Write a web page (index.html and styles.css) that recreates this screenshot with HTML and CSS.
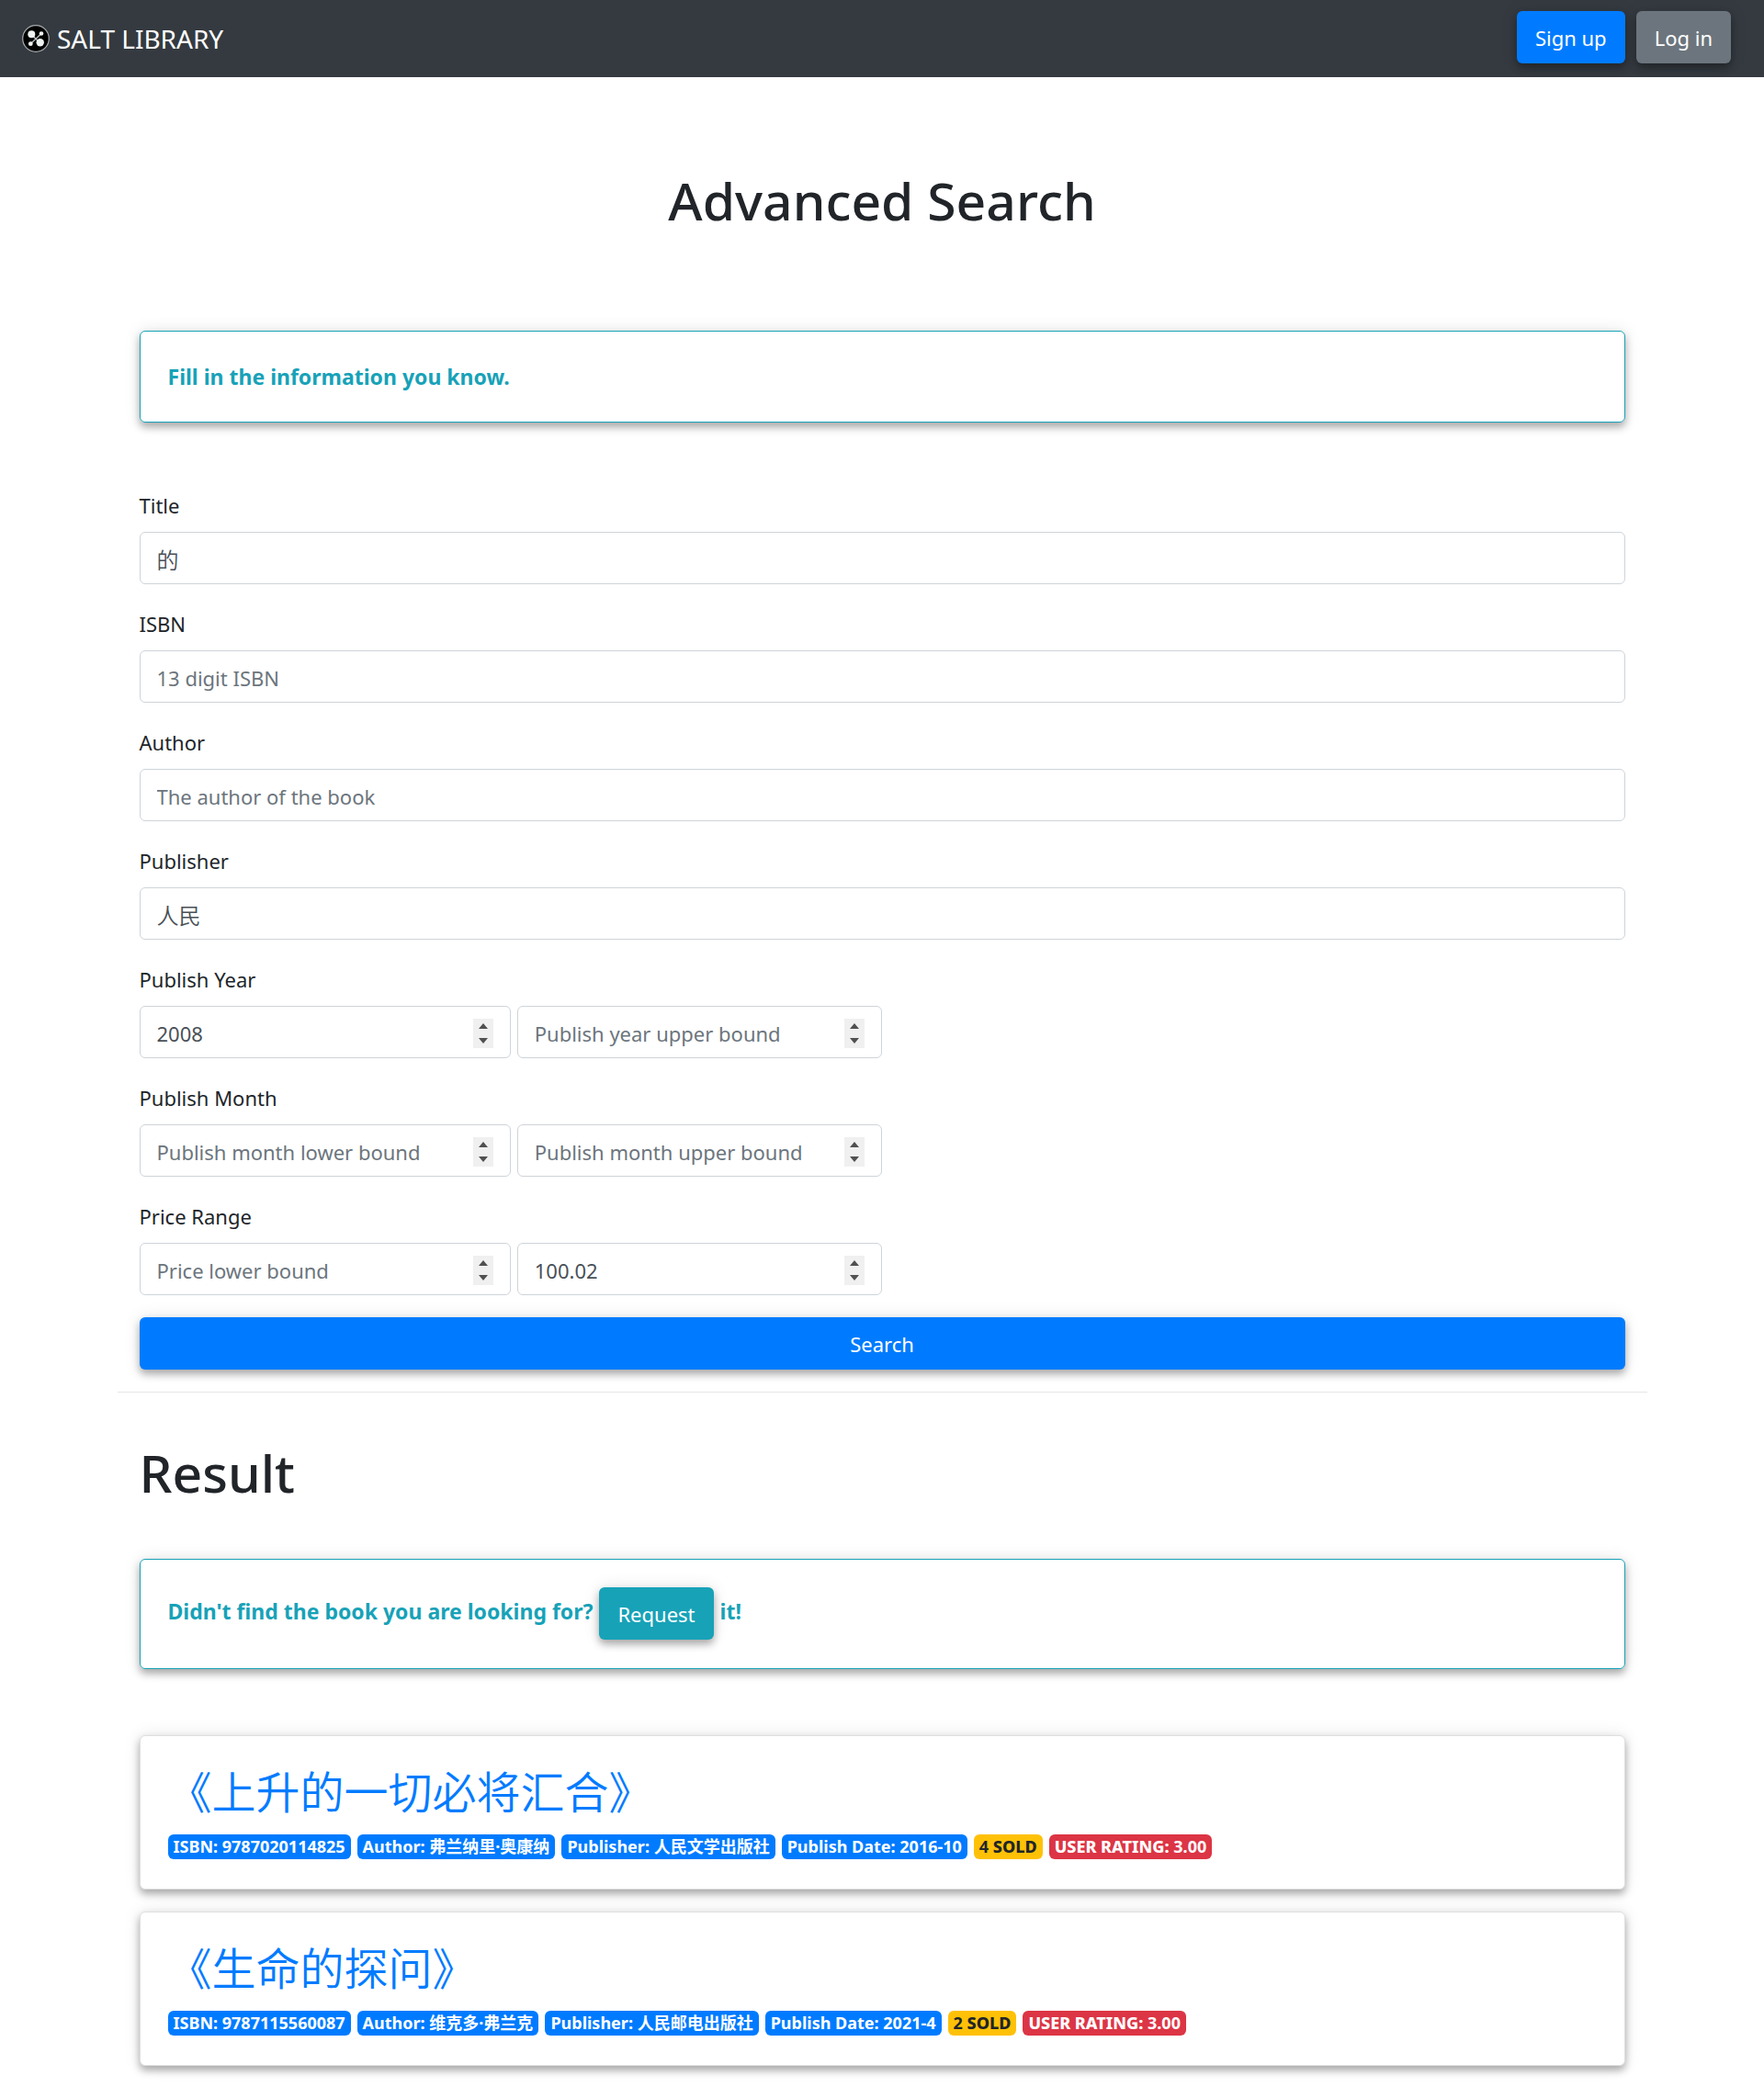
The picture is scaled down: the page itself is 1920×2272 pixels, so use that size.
FILE: index.html
```html
<!DOCTYPE html>
<html lang="en">
<head>
<meta charset="utf-8">
<meta name="viewport" content="width=device-width, initial-scale=1">
<title>Advanced Search - SALT LIBRARY</title>
<link rel="stylesheet" href="styles.css">
</head>
<body>
<nav class="navbar">
  <a class="brand" href="#">
    <svg class="brand-logo" viewBox="0 0 30 30" aria-hidden="true">
      <circle cx="15" cy="15" r="14.3" fill="#000" stroke="#a9acaf" stroke-width="1.2"/>
      <path d="M10 10.500L19.500 19.500M21 9.500L9.500 20.500" stroke="#b9bdbd" stroke-width="1.300"/>
      <circle cx="10.300" cy="10.300" r="4" fill="#eef3f2"/>
      <circle cx="19.700" cy="19.300" r="4.200" fill="#eef3f2"/>
      <circle cx="21" cy="9.500" r="2.300" fill="#eef3f2"/>
      <circle cx="9.300" cy="20.700" r="2.400" fill="#eef3f2"/>
    </svg>
    <span>SALT LIBRARY</span>
  </a>
  <div class="nav-actions">
    <button class="btn btn-primary" type="button">Sign up</button>
    <button class="btn btn-secondary" type="button">Log in</button>
  </div>
</nav>

<main class="container">
  <h1 class="page-title">Advanced Search</h1>

  <div class="alert">Fill in the information you know.</div>

  <form class="search-form" action="#">
    <div class="form-group">
      <label for="title">Title</label>
      <input class="control cjk" id="title" type="text" value="的">
    </div>
    <div class="form-group">
      <label for="isbn">ISBN</label>
      <input class="control" id="isbn" type="text" placeholder="13 digit ISBN">
    </div>
    <div class="form-group">
      <label for="author">Author</label>
      <input class="control" id="author" type="text" placeholder="The author of the book">
    </div>
    <div class="form-group">
      <label for="publisher">Publisher</label>
      <input class="control cjk" id="publisher" type="text" value="人民">
    </div>
    <div class="form-group">
      <label for="year-low">Publish Year</label>
      <div class="range">
        <input class="control" id="year-low" type="number" value="2008" placeholder="Publish year lower bound">
        <input class="control" type="number" placeholder="Publish year upper bound" aria-label="Publish year upper bound">
      </div>
    </div>
    <div class="form-group">
      <label for="month-low">Publish Month</label>
      <div class="range">
        <input class="control" id="month-low" type="number" placeholder="Publish month lower bound">
        <input class="control" type="number" placeholder="Publish month upper bound" aria-label="Publish month upper bound">
      </div>
    </div>
    <div class="form-group">
      <label for="price-low">Price Range</label>
      <div class="range">
        <input class="control" id="price-low" type="number" step="0.01" placeholder="Price lower bound">
        <input class="control" type="number" step="0.01" value="100.02" placeholder="Price upper bound" aria-label="Price upper bound">
      </div>
    </div>
    <button class="btn btn-primary btn-block" type="submit">Search</button>
  </form>

  <hr class="divider">

  <section class="results">
    <h2 class="section-title">Result</h2>

    <div class="alert alert-request">
      <span>Didn't find the book you are looking for?</span>
      <button class="btn btn-info" type="button">Request</button>
      <span>it!</span>
    </div>

    <article class="card">
      <h3 class="book-title"><a href="#">《上升的一切必将汇合》</a></h3>
      <div class="badges">
        <span class="badge">ISBN: 9787020114825</span>
        <span class="badge">Author: <span lang="zh">弗兰纳里·奥康纳</span></span>
        <span class="badge">Publisher: <span lang="zh">人民文学出版社</span></span>
        <span class="badge">Publish Date: 2016-10</span>
        <span class="badge badge-sold">4 <b>SOLD</b></span>
        <span class="badge badge-rating"><b>USER RATING:</b> 3.00</span>
      </div>
    </article>

    <article class="card">
      <h3 class="book-title"><a href="#">《生命的探问》</a></h3>
      <div class="badges">
        <span class="badge">ISBN: 9787115560087</span>
        <span class="badge">Author: <span lang="zh">维克多·弗兰克</span></span>
        <span class="badge">Publisher: <span lang="zh">人民邮电出版社</span></span>
        <span class="badge">Publish Date: 2021-4</span>
        <span class="badge badge-sold">2 <b>SOLD</b></span>
        <span class="badge badge-rating"><b>USER RATING:</b> 3.00</span>
      </div>
    </article>
  </section>
</main>
</body>
</html>
```
FILE: styles.css
```css
*, *::before, *::after { box-sizing: border-box; }

:root {
  --blue: #007bff;
  --teal: #17a2b8;
  --text: #212529;
  --shadow: 0 5px 8px rgba(0, 0, 0, 0.3), 0 0 18px rgba(0, 0, 0, 0.1);
}

body {
  margin: 0;
  background: #fff;
  color: var(--text);
  font: 400 22px/36px "Noto Sans", "Noto Sans CJK SC", sans-serif;
}

.navbar {
  display: flex;
  align-items: center;
  justify-content: space-between;
  min-height: 84px;
  padding: 12px 36px 12px 24px;
  background: #343a40;
}

.brand {
  display: flex;
  align-items: center;
  gap: 8px;
  color: #fff;
  font-size: 28px;
  text-decoration: none;
}

.brand-logo { width: 30px; height: 30px; }

.nav-actions {
  display: flex;
  gap: 12px;
  align-self: flex-start;
}

.btn {
  height: 57px;
  padding: 0 20px;
  border: 0;
  border-radius: 6px;
  color: #fff;
  font: inherit;
  box-shadow: var(--shadow);
  cursor: pointer;
}

.btn-primary { background: var(--blue); }
.btn-secondary { background: #6c757d; }
.btn-info { background: var(--teal); }
.btn-block { display: block; width: 100%; }

.container {
  max-width: 1665px;
  margin: 0 auto;
  padding: 0 24px 23px;
}

.page-title, .section-title {
  margin: 0;
  font-size: 57px;
  font-weight: 500;
  line-height: 72px;
}

.page-title {
  padding: 98px 0 106px;
  text-align: center;
}

.alert {
  padding: 31px 30px;
  border: 1px solid var(--teal);
  border-radius: 6px;
  color: var(--teal);
  font-size: 23px;
  font-weight: 700;
  box-shadow: var(--shadow);
}

.search-form { margin-top: 71px; }

.form-group { margin-bottom: 24px; }

.form-group label {
  display: block;
  margin-bottom: 10px;
  line-height: 38px;
}

.control {
  display: block;
  width: 100%;
  height: 57px;
  padding: 2px 18px 0;
  border: 1px solid #ced4da;
  border-radius: 6px;
  background: #fff;
  color: #495057;
  font: inherit;
}

.control::placeholder { color: #6c757d; opacity: 1; }

.cjk {
  font-family: "Noto Sans CJK SC", sans-serif;
  font-size: 24px;
  font-weight: 350;
}

.range {
  display: grid;
  grid-template-columns: 404fr 397fr;
  gap: 7px;
  width: 50%;
}

.control[type="number"] { appearance: textfield; }

.control[type="number"]::-webkit-inner-spin-button {
  appearance: none;
  width: 22px;
  height: 32px;
  opacity: 1;
  background: #f0f0f0 url("data:image/svg+xml,%3Csvg xmlns='http://www.w3.org/2000/svg' viewBox='0 0 22 32'%3E%3Cpath d='M6 11L11 5L16 11ZM6 21L11 27L16 21Z' fill='%23505050'/%3E%3C/svg%3E") center / 22px 32px no-repeat;
}

.divider {
  margin: 24px -24px 0;
  border: 0;
  border-top: 1px solid #e5e5e5;
}

.section-title { padding: 51px 0 58px; }

.alert-request {
  display: flex;
  align-items: flex-start;
  gap: 7px;
  padding: 30px 30px 31px;
  margin-bottom: 72px;
  line-height: 52px;
}

.alert-request .btn {
  font-size: 22px;
  font-weight: 400;
}

.card {
  padding: 30px 30px 32px;
  border: 1px solid #dfdfdf;
  border-radius: 6px;
  background: #fff;
  box-shadow: var(--shadow);
}

.card + .card { margin-top: 24px; }

.book-title {
  margin: 0 0 21px;
  font: 350 48px/56px "Noto Sans CJK SC", sans-serif;
}

.book-title a { color: var(--blue); text-decoration: none; }

.badges {
  display: flex;
  flex-wrap: wrap;
  gap: 7px;
}

.badge {
  height: 27px;
  padding: 0 6px;
  border-radius: 6px;
  background: var(--blue);
  color: #fff;
  font-size: 18px;
  font-weight: 700;
  line-height: 27px;
  white-space: nowrap;
}

.badge b { font-weight: 800; }

.badge-sold { background: #ffc107; color: var(--text); }
.badge-rating { background: #dc3545; }
```
